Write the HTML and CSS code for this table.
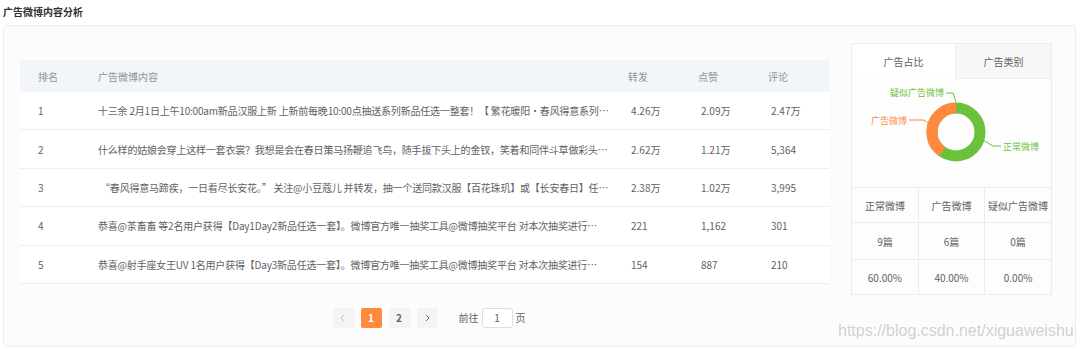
FILE: index.html
```html
<!DOCTYPE html>
<html>
<head>
  <meta charset="UTF-8">
  <title>广告微博内容分析</title>
  <link rel="stylesheet" href="styles.css">
</head>
<body>

  <h3 class="tytul">广告微博内容分析</h3>

  <div class="karta">
    <div class="lewa-kolumna">
      <table class="tabela">
        <colgroup>
          <col style="width:60px">
          <col style="width:540px">
          <col style="width:70px">
          <col style="width:70px">
          <col style="width:70px">
        </colgroup>
        <thead>
          <tr>
            <th>排名</th>
            <th>广告微博内容</th>
            <th class="liczba">转发</th>
            <th class="liczba">点赞</th>
            <th class="liczba">评论</th>
          </tr>
        </thead>
        <tbody>
          <tr>
            <td>1</td>
            <td class="tresc"><div>十三余 2月1日上午10:00am新品汉服上新 上新前每晚10:00点抽送系列新品任选一整套！【 繁花暖阳·春风得意系列…</div></td>
            <td class="liczba">4.26万</td>
            <td class="liczba">2.09万</td>
            <td class="liczba">2.47万</td>
          </tr>
          <tr>
            <td>2</td>
            <td class="tresc"><div>什么样的姑娘会穿上这样一套衣裳？我想是会在春日策马扬鞭追飞鸟，随手拔下头上的金钗，笑着和同伴斗草做彩头…</div></td>
            <td class="liczba">2.62万</td>
            <td class="liczba">1.21万</td>
            <td class="liczba">5,364</td>
          </tr>
          <tr>
            <td>3</td>
            <td class="tresc"><div>&nbsp;“春风得意马蹄疾，一日看尽长安花。” 关注@小豆蔻儿 并转发，抽一个送同款汉服【百花珠玑】或【长安春日】任…</div></td>
            <td class="liczba">2.38万</td>
            <td class="liczba">1.02万</td>
            <td class="liczba">3,995</td>
          </tr>
          <tr>
            <td>4</td>
            <td class="tresc"><div>恭喜@茶畜畜 等2名用户获得【Day1Day2新品任选一套】。微博官方唯一抽奖工具@微博抽奖平台 对本次抽奖进行…</div></td>
            <td class="liczba">221</td>
            <td class="liczba">1,162</td>
            <td class="liczba">301</td>
          </tr>
          <tr>
            <td>5</td>
            <td class="tresc"><div>恭喜@射手座女王UV 1名用户获得【Day3新品任选一套】。微博官方唯一抽奖工具@微博抽奖平台 对本次抽奖进行…</div></td>
            <td class="liczba">154</td>
            <td class="liczba">887</td>
            <td class="liczba">210</td>
          </tr>
        </tbody>
      </table>

      <div class="stronicowanie">
        <span class="przycisk wylaczony">
          <svg width="8" height="8" viewBox="0 0 8 8"><polyline points="5,1 2,4 5,7" fill="none" stroke="currentColor" stroke-width="1"/></svg>
        </span>
        <span class="przycisk aktywny">1</span>
        <span class="przycisk">2</span>
        <span class="przycisk">
          <svg width="8" height="8" viewBox="0 0 8 8"><polyline points="3,1 6,4 3,7" fill="none" stroke="currentColor" stroke-width="1"/></svg>
        </span>
        <span class="idz">前往 <span class="pole">1</span> 页</span>
      </div>
    </div>

    <div class="panel">
      <div class="zakladki">
        <div class="zakladka aktywna">广告占比</div>
        <div class="zakladka">广告类别</div>
      </div>

      <svg class="wykres" width="199" height="108" viewBox="0 0 199 108">
        <circle cx="104" cy="53" r="24" fill="none" stroke="#6cc13c" stroke-width="11"/>
        <circle cx="104" cy="53" r="24" fill="none" stroke="#ff8a3d" stroke-width="11"
                stroke-dasharray="60.3 150.8" transform="rotate(-90 104 53) scale(1 -1) translate(0 -106)"/>
        <polyline points="94,14 101,14 104,23" fill="none" stroke="#6cc13c" stroke-width="1"/>
        <polyline points="57,41 72,41 77,45" fill="none" stroke="#ff8a3d" stroke-width="1"/>
        <polyline points="131,61 141,67 149,67" fill="none" stroke="#6cc13c" stroke-width="1"/>
        <text x="92" y="17" text-anchor="end" class="etykieta zielona">疑似广告微博</text>
        <text x="55" y="45" text-anchor="end" class="etykieta pomaranczowa">广告微博</text>
        <text x="151" y="71" class="etykieta zielona">正常微博</text>
      </svg>

      <table class="statystyki">
        <tr class="r1"><td>正常微博</td><td>广告微博</td><td>疑似广告微博</td></tr>
        <tr class="r2"><td>9篇</td><td>6篇</td><td>0篇</td></tr>
        <tr class="r3"><td>60.00%</td><td>40.00%</td><td>0.00%</td></tr>
      </table>
    </div>
  </div>

  <div class="znak-wodny">https://blog.csdn.net/xiguaweishu</div>

</body>
</html>
```

FILE: styles.css
```css
body {
  margin: 0;
  padding: 0;
  background-color: white;
  font-family: "Noto Sans CJK SC", "Noto Sans", sans-serif;
  color: #606266;
  position: relative;
}

.tytul {
  margin: 0;
  padding: 5px 3px 0 3px;
  font-size: 10px;
  line-height: 14px;
  font-weight: bold;
  color: #303133;
}

.karta {
  margin: 6px 4px 0 3px;
  height: 322px;
  box-sizing: border-box;
  border: 1px solid #ececec;
  border-radius: 4px;
  background-color: #fcfcfc;
  display: flex;
  gap: 21px;
  padding: 17px 23px 0 16px;
}

.lewa-kolumna {
  width: 810px;
  padding-top: 17px;
}

.tabela {
  width: 810px;
  border-collapse: collapse;
  table-layout: fixed;
  font-size: 10px;
}

.tabela th {
  height: 32px;
  background-color: #f2f5f9;
  color: #909399;
  font-weight: normal;
  text-align: left;
  padding: 0 8px 0 18px;
}

.tabela td {
  height: 37.4px;
  background-color: white;
  border-bottom: 1px solid #ebeef5;
  padding: 0 8px 0 18px;
  color: #606266;
}

.tabela .liczba {
  padding-left: 8px;
}

.tabela td.liczba {
  padding-left: 11px;
}

.tresc div {
  white-space: nowrap;
  overflow: hidden;
  letter-spacing: -0.2px;
}

.stronicowanie {
  margin-top: 24px;
  display: flex;
  align-items: center;
  justify-content: center;
  gap: 7px;
  padding-left: 8px;
  font-size: 10px;
}

.przycisk {
  width: 21px;
  height: 20px;
  display: flex;
  align-items: center;
  justify-content: center;
  background-color: #f4f4f5;
  color: #606266;
  font-weight: bold;
  border-radius: 2px;
}

.przycisk.wylaczony {
  color: #c0c4cc;
}

.przycisk.aktywny {
  background-color: #ff8a3d;
  color: white;
}

.idz {
  margin-left: 14px;
  display: flex;
  align-items: center;
  gap: 3px;
  color: #606266;
}

.pole {
  width: 29px;
  height: 18px;
  line-height: 18px;
  text-align: center;
  border: 1px solid #dcdfe6;
  border-radius: 3px;
  background-color: white;
}

.panel {
  width: 201px;
  height: 252px;
  box-sizing: border-box;
  border: 1px solid #ececec;
  background-color: #fdfdfd;
}

.zakladki {
  display: flex;
  height: 35px;
}

.zakladka {
  flex: 1;
  display: flex;
  align-items: center;
  justify-content: center;
  font-size: 10px;
  color: #606266;
  background-color: #f7f7f7;
  border-bottom: 1px solid #ececec;
  border-left: 1px solid #ececec;
}

.zakladka.aktywna {
  flex: 0 0 103px;
  background-color: white;
  border-bottom-color: white;
  border-left: none;
}

.wykres {
  display: block;
}

.etykieta {
  font-size: 9px;
}

.zielona {
  fill: #6cc13c;
}

.pomaranczowa {
  fill: #ff8a3d;
}

.statystyki {
  width: 100%;
  border-collapse: collapse;
  table-layout: fixed;
  font-size: 10px;
  text-align: center;
}

.statystyki td {
  border: 1px solid #ececec;
  color: #606266;
  padding: 0;
}

.statystyki tr td:first-child {
  border-left: none;
}

.statystyki tr td:last-child {
  border-right: none;
}

.statystyki tr.r3 td {
  border-bottom: none;
}

.statystyki .r1 td {
  height: 34px;
}

.statystyki .r2 td {
  height: 36px;
}

.statystyki .r3 td {
  height: 35px;
}

.znak-wodny {
  position: absolute;
  left: 838px;
  top: 322px;
  font-family: "Liberation Sans", sans-serif;
  font-size: 16px;
  color: rgba(195, 195, 195, 0.75);
}
```
